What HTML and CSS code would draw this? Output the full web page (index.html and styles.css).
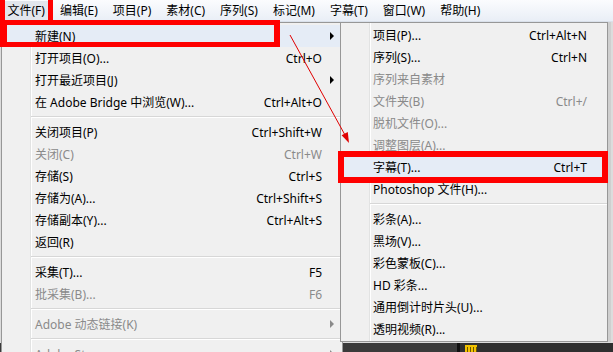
FILE: index.html
```html
<!DOCTYPE html>
<html lang="zh-CN">
<head>
    <meta charset="UTF-8">
    <title>文件菜单 - 新建</title>
    <link rel="stylesheet" href="styles.css">
</head>
<body>
    <div class="screen">
        <div class="menubar">
            <span class="open">文件(F)</span>
            <span>编辑(E)</span>
            <span>项目(P)</span>
            <span>素材(C)</span>
            <span>序列(S)</span>
            <span>标记(M)</span>
            <span>字幕(T)</span>
            <span>窗口(W)</span>
            <span>帮助(H)</span>
        </div>
        <div class="workspace">
            <div class="panel-light"></div>
            <div class="panel-dark">
                <div class="panel-left"></div>
                <div class="panel-split"></div>
                <div class="panel-right"><i class="tag"></i></div>
            </div>
        </div>

        <!-- 文件菜单 -->
        <div class="menu menu-file">
            <div class="item hot sub">新建(N)</div>
            <div class="item">打开项目(O)...<span class="key">Ctrl+O</span></div>
            <div class="item sub">打开最近项目(J)</div>
            <div class="item">在 Adobe Bridge 中浏览(W)...<span class="key">Ctrl+Alt+O</span></div>
            <div class="sep"></div>
            <div class="item">关闭项目(P)<span class="key">Ctrl+Shift+W</span></div>
            <div class="item off">关闭(C)<span class="key">Ctrl+W</span></div>
            <div class="item">存储(S)<span class="key">Ctrl+S</span></div>
            <div class="item">存储为(A)...<span class="key">Ctrl+Shift+S</span></div>
            <div class="item">存储副本(Y)...<span class="key">Ctrl+Alt+S</span></div>
            <div class="item">返回(R)</div>
            <div class="sep"></div>
            <div class="item">采集(T)...<span class="key">F5</span></div>
            <div class="item off">批采集(B)...<span class="key">F6</span></div>
            <div class="sep"></div>
            <div class="item off sub">Adobe 动态链接(K)</div>
            <div class="sep"></div>
            <div class="item off sub">Adobe Story</div>
        </div>

        <!-- 新建子菜单 -->
        <div class="menu menu-new">
            <div class="item">项目(P)...<span class="key">Ctrl+Alt+N</span></div>
            <div class="item">序列(S)...<span class="key">Ctrl+N</span></div>
            <div class="item off">序列来自素材</div>
            <div class="item off">文件夹(B)<span class="key">Ctrl+/</span></div>
            <div class="item off">脱机文件(O)...</div>
            <div class="item off">调整图层(A)...</div>
            <div class="item hot">字幕(T)...<span class="key">Ctrl+T</span></div>
            <div class="item">Photoshop 文件(H)...</div>
            <div class="sep"></div>
            <div class="item">彩条(A)...</div>
            <div class="item">黑场(V)...</div>
            <div class="item">彩色蒙板(C)...</div>
            <div class="item">HD 彩条...</div>
            <div class="item">通用倒计时片头(U)...</div>
            <div class="item">透明视频(R)...</div>
        </div>

        <!-- 标注 -->
        <div class="mark mark-top"></div>
        <div class="mark mark-new"></div>
        <div class="mark mark-title"></div>
        <svg class="pointer" width="613" height="352" viewBox="0 0 613 352">
            <line x1="290" y1="35" x2="345" y2="135" stroke="#e00000" stroke-width="1"/>
            <polygon points="349,143 341.6,135.3 347.8,131.9" fill="#e00000"/>
        </svg>
    </div>
</body>
</html>
```

FILE: styles.css
```css
body {
    margin: 0;
    font-family: "Noto Sans", "Noto Sans CJK SC", sans-serif;
    font-size: 12px;
    color: #000;
}
.screen {
    position: relative;
    width: 613px;
    height: 352px;
    overflow: hidden;
    display: flex;
    flex-direction: column;
    background: #d9d9d9;
}
.menubar {
    height: 22px;
    display: flex;
    align-items: center;
    padding-left: 0;
    box-sizing: border-box;
    background: linear-gradient(#fbfcfe, #e9eef6);
    border-bottom: 1px solid #dae1eb;
}
.menubar span {
    padding: 0 7.5px;
    height: 20px;
    line-height: 20px;
    white-space: nowrap;
}
.menubar .open {
    background: #e2e6ec;
}
.workspace {
    flex: 1;
    display: flex;
    flex-direction: column;
}
.panel-light {
    flex: 1;
    background: #dcdcdc;
}
.panel-dark {
    height: 9px;
    display: flex;
    background: #2f2f2f;
}
.panel-left {
    width: 457px;
    background: #3a3a3a;
}
.panel-split {
    width: 3px;
    background: #111;
}
.panel-right {
    flex: 1;
    padding: 2px 0 0 5px;
}
.tag {
    display: block;
    width: 12px;
    height: 8px;
    background: repeating-linear-gradient(90deg, #f2c200 0 2px, #6b5500 2px 3px);
    border-top: 2px solid #f2c200;
    box-sizing: border-box;
}

/* 菜单 */
.menu {
    position: absolute;
    top: 22px;
    background: #f0f0f0;
    border: 1px solid #979797;
    box-sizing: border-box;
    white-space: nowrap;
}
.menu::before {
    content: "";
    position: absolute;
    left: 28px;
    top: 0;
    bottom: 0;
    width: 1px;
    background: #e2e3e3;
    border-right: 1px solid #fff;
}
.menu-file {
    left: 1px;
    width: 342px;
    height: 360px;
    padding-top: 2px;
}
.menu-new {
    left: 340px;
    width: 268px;
    padding: 1px 0;
    box-shadow: 3px 0 0 #cfcfcf;
}
.item {
    position: relative;
    display: flex;
    align-items: center;
    height: 22px;
    padding: 0 20px 0 33px;
}
.menu-new .item {
    padding-left: 32px;
}
.item .key {
    margin-left: auto;
}
.item.off {
    color: #8a8a8a;
}
.item.hot {
    background: #e5ecf6;
}
.item.sub::after {
    content: "";
    position: absolute;
    right: 8px;
    top: 7px;
    border-left: 4px solid #000;
    border-top: 4px solid transparent;
    border-bottom: 4px solid transparent;
}
.item.off.sub::after {
    border-left-color: #8a8a8a;
}
.sep {
    position: relative;
    height: 8px;
}
.sep::after {
    content: "";
    position: absolute;
    left: 29px;
    right: 0;
    top: 3px;
    height: 1px;
    background: #d7d7d7;
    border-bottom: 1px solid #fff;
}

/* 红色标注 */
.mark {
    position: absolute;
    border: 5px solid #ff0000;
    box-sizing: border-box;
}
.mark-top {
    left: 0;
    top: -5px;
    width: 53px;
    height: 30px;
}
.mark-new {
    left: 0;
    top: 20px;
    width: 280px;
    height: 27px;
    border-width: 5px 6px 5px 7px;
}
.mark-title {
    left: 338px;
    top: 151px;
    width: 270px;
    height: 32px;
    border-width: 6px;
}
.pointer {
    position: absolute;
    left: 0;
    top: 0;
    pointer-events: none;
}
```
